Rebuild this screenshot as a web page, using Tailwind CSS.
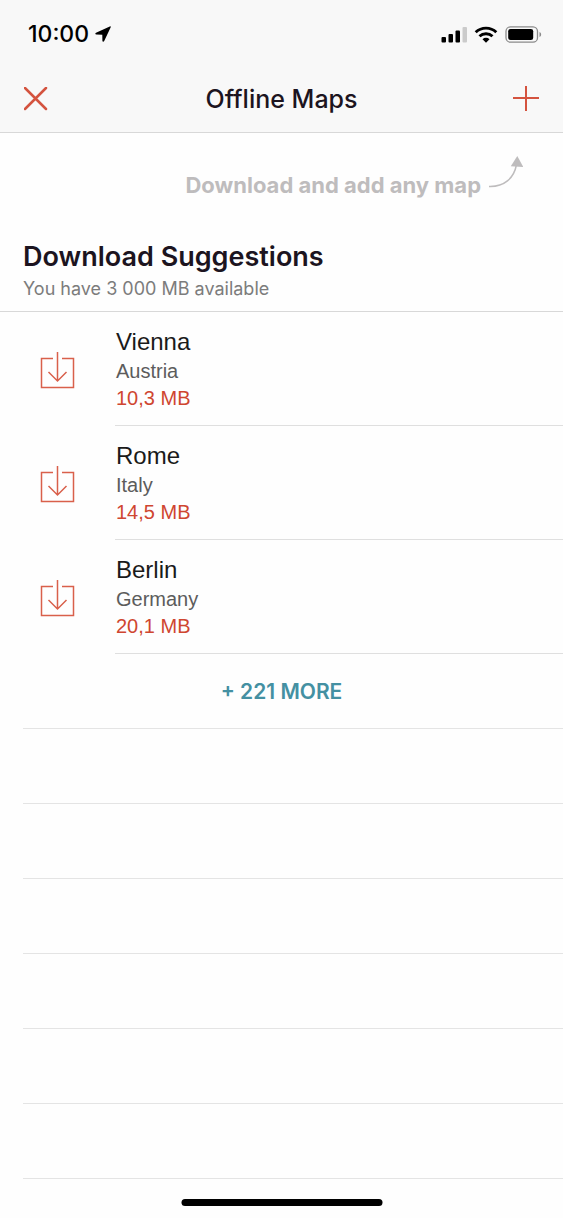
<!DOCTYPE html>
<html lang="en">
<head>
<meta charset="utf-8">
<meta name="viewport" content="width=device-width, initial-scale=1">
<title>Offline Maps</title>
<script src="https://cdn.jsdelivr.net/npm/@tailwindcss/browser@4"></script>
</head>
<body class="relative min-h-screen bg-[#fefefe] font-['Inter',sans-serif] text-[#1c1420]">
<header class="border-b border-[#d8d8d8] bg-[#f8f8f8]">
  <div class="flex h-[66px] items-center justify-between pt-[2px] pr-[21px] pl-7 text-black">
    <div class="flex items-center gap-[6px]">
      <span class="text-[23px] leading-7 font-medium">10:00</span>
      <svg class="h-4 w-4" viewBox="0 0 16 16" fill="currentColor" aria-hidden="true"><path d="M14.800.4 1 6.800c-1.100.6-.8 1.800.3 1.800l6 .1.1 6c0 1.300 1.200 1.500 1.800.3L15.700 1.200c.3-.7-.2-1.100-.9-.8z"/></svg>
    </div>
    <div class="flex items-center gap-[7px]">
      <svg class="h-[17px] w-[26px]" viewBox="0 0 26 17" aria-hidden="true"><rect x="0.500" y="11" width="4.500" height="5.500" rx="1"/><rect x="7.500" y="8" width="4.500" height="8.500" rx="1"/><rect x="14.500" y="4.500" width="4.500" height="12" rx="1"/><rect x="21.500" y="1" width="4.500" height="15.500" rx="1" fill="#cbcbcb"/></svg>
      <svg class="h-[17px] w-6" viewBox="0 0 24 17" fill="none" stroke="currentColor" stroke-width="2.900" aria-hidden="true"><path d="M1.700 6.300a14.800 14.800 0 0 1 20.600 0M5.500 10.300a9.400 9.400 0 0 1 13 0"/><path d="M8.500 13.300a5 5 0 0 1 7 0L12 16.700z" fill="currentColor" stroke="none"/></svg>
      <svg class="h-[17px] w-[37px]" viewBox="0 0 37 17" aria-hidden="true"><rect x="1" y="0.800" width="31.500" height="15.400" rx="4.500" fill="none" stroke="#8a8a8a" stroke-width="1.300"/><rect x="3.200" y="3" width="25" height="11" rx="2.300"/><path d="M34.500 6v5c2.200-.8 2.200-4.200 0-5z" fill="#8a8a8a"/></svg>
    </div>
  </div>
  <div class="grid h-[66px] grid-cols-[1fr_auto_1fr] items-center px-6">
    <button type="button" aria-label="Close" class="justify-self-start text-[#d4533f]"><svg class="h-6 w-6" viewBox="0 0 24 24" fill="none" stroke="currentColor" stroke-width="2.500" stroke-linecap="round"><path d="M1 1l21 21M22 1L1 22"/></svg></button>
    <h1 class="text-[25px] leading-8 font-medium">Offline Maps</h1>
    <button type="button" aria-label="Add map" class="justify-self-end text-[#d4533f]"><svg class="h-[26px] w-[26px]" viewBox="0 0 26 26" fill="none" stroke="currentColor" stroke-width="2"><path d="M13 0v25M0 12h26"/></svg></button>
  </div>
</header>
<main>
  <section class="border-b border-[#d8d8d8] pt-5 pb-[10px]">
    <div class="flex justify-end gap-[6px] pr-10 text-[#bebcbd]">
      <p class="mt-5 text-[22px] leading-6 font-bold">Download and add any map</p>
      <svg class="h-9 w-9" viewBox="0 0 36 36" aria-hidden="true"><path d="M2 33.500c15 .5 25-8 27.500-22" fill="none" stroke="currentColor" stroke-width="1.500"/><path d="M30.300 3l6 11-12.500-.7z" fill="currentColor"/></svg>
    </div>
    <div class="mt-11 px-[23px]">
      <h2 class="text-[27px] leading-8 font-semibold">Download Suggestions</h2>
      <p class="mt-1 text-[18px] leading-6 text-[#7c7c7c]">You have 3 000 MB available</p>
    </div>
  </section>
  <ul class="font-['Liberation_Sans',sans-serif] text-[20px]">
    <li class="flex">
      <div class="w-[115px] shrink-0 pt-[39px] pl-10"><button type="button" aria-label="Download Vienna" class="block text-[#d9604b]"><svg class="h-[38px] w-9" viewBox="0 0 36 38" fill="none" stroke="currentColor" stroke-width="1.500"><path d="M13 7.500H1.500v29h32v-29H22M17.500 1v29M8.500 21l9 9 9-9"/></svg></button></div>
      <div class="flex-1 border-b border-[#dfdfdf] pt-[15px] pb-[14px] pl-px">
        <h3 class="text-[24px] leading-[30px] text-[#1a1a1a]">Vienna</h3>
        <p class="leading-7 text-[#5c5c5c]">Austria</p>
        <p class="leading-[26px] text-[#cf4630]">10,3 MB</p>
      </div>
    </li>
    <li class="flex">
      <div class="w-[115px] shrink-0 pt-[39px] pl-10"><button type="button" aria-label="Download Rome" class="block text-[#d9604b]"><svg class="h-[38px] w-9" viewBox="0 0 36 38" fill="none" stroke="currentColor" stroke-width="1.500"><path d="M13 7.500H1.500v29h32v-29H22M17.500 1v29M8.500 21l9 9 9-9"/></svg></button></div>
      <div class="flex-1 border-b border-[#dfdfdf] pt-[15px] pb-[14px] pl-px">
        <h3 class="text-[24px] leading-[30px] text-[#1a1a1a]">Rome</h3>
        <p class="leading-7 text-[#5c5c5c]">Italy</p>
        <p class="leading-[26px] text-[#cf4630]">14,5 MB</p>
      </div>
    </li>
    <li class="flex">
      <div class="w-[115px] shrink-0 pt-[39px] pl-10"><button type="button" aria-label="Download Berlin" class="block text-[#d9604b]"><svg class="h-[38px] w-9" viewBox="0 0 36 38" fill="none" stroke="currentColor" stroke-width="1.500"><path d="M13 7.500H1.500v29h32v-29H22M17.500 1v29M8.500 21l9 9 9-9"/></svg></button></div>
      <div class="flex-1 border-b border-[#dfdfdf] pt-[15px] pb-[14px] pl-px">
        <h3 class="text-[24px] leading-[30px] text-[#1a1a1a]">Berlin</h3>
        <p class="leading-7 text-[#5c5c5c]">Germany</p>
        <p class="leading-[26px] text-[#cf4630]">20,1 MB</p>
      </div>
    </li>
  </ul>
  <button type="button" class="block h-[74px] w-full pt-[2px] text-[21px] leading-7 font-semibold text-[#4490a2]">+ 221 MORE</button>
  <div class="ml-[23px]" aria-hidden="true">
    <div class="h-[75px] border-t border-[#e4e4e4]"></div>
    <div class="h-[75px] border-t border-[#e4e4e4]"></div>
    <div class="h-[75px] border-t border-[#e4e4e4]"></div>
    <div class="h-[75px] border-t border-[#e4e4e4]"></div>
    <div class="h-[75px] border-t border-[#e4e4e4]"></div>
    <div class="h-[75px] border-t border-[#e4e4e4]"></div>
    <div class="h-10 border-t border-[#e4e4e4]"></div>
  </div>
</main>
<div class="absolute bottom-3 left-1/2 h-[7px] w-[201px] -translate-x-1/2 rounded-full bg-black"></div>
</body>
</html>
